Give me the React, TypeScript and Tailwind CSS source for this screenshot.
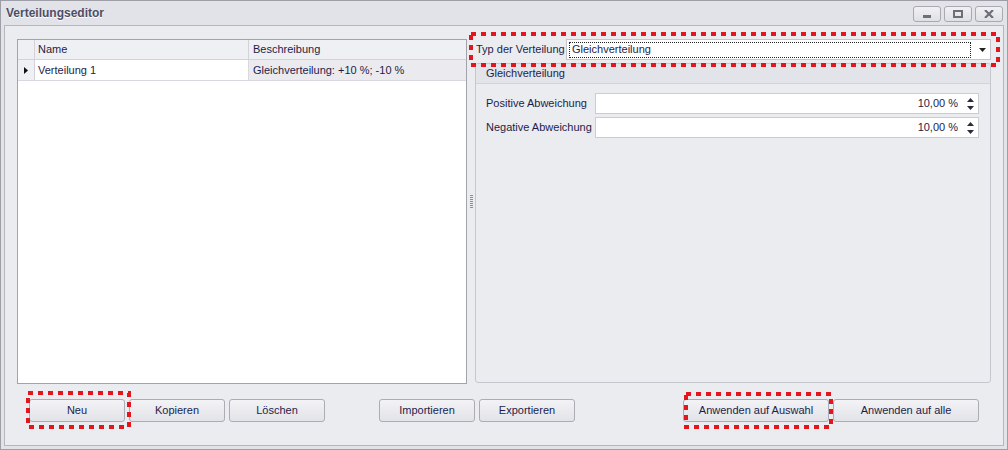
import React from "react";

const RED = "#e3161d";

function DotBox({ x, y, w, h }: { x: number; y: number; w: number; h: number }) {
  return (
    <svg
      className="absolute pointer-events-none"
      style={{ left: x, top: y }}
      width={w}
      height={h}
    >
      <rect
        x={2}
        y={2}
        width={w - 4}
        height={h - 4}
        fill="none"
        stroke={RED}
        strokeWidth={4}
        strokeDasharray="5 5"
      />
    </svg>
  );
}

function Btn({ label, w }: { label: string; w: string }) {
  return (
    <div
      className={`${w} h-[23px] flex items-center justify-center rounded-[3px] border border-[#acacb4] bg-gradient-to-b from-[#f3f3f6] to-[#e2e3e8] text-[#1d1d4a]`}
    >
      {label}
    </div>
  );
}

function WinBtn({ kind }: { kind: "min" | "max" | "close" }) {
  return (
    <div className="w-[28px] h-[16px] rounded-[3px] border border-[#a9a9b1] bg-gradient-to-b from-[#f1f1f4] to-[#dfe0e5] flex items-center justify-center">
      {kind === "min" && (
        <svg width="10" height="8">
          <rect x="1" y="5" width="8" height="3" fill="#6e6e78" />
        </svg>
      )}
      {kind === "max" && (
        <svg width="10" height="8">
          <rect x="1" y="1" width="8" height="6" fill="none" stroke="#6e6e78" strokeWidth="2" />
        </svg>
      )}
      {kind === "close" && (
        <svg width="10" height="8">
          <path d="M1 0 L9 8 M9 0 L1 8" stroke="#6e6e78" strokeWidth="2.2" />
        </svg>
      )}
    </div>
  );
}

function SpinInput() {
  return (
    <div className="flex-1 h-[21px] bg-white border border-[#cbcbd3] flex items-center justify-end pr-[4px]">
      <span className="mr-[9px]">10,00 %</span>
      <svg width="7" height="14">
        <path d="M3.5 1 L7 5 L0 5 Z" fill="#2a2a3a" />
        <path d="M0 9 L7 9 L3.5 13 Z" fill="#2a2a3a" />
      </svg>
    </div>
  );
}

export default function App() {
  return (
    <div className="relative w-[1008px] h-[450px] overflow-hidden bg-[#e2e3e8] border border-[#9e9ea6] flex flex-col font-['Liberation_Sans',Arial,sans-serif] text-[11px] text-[#1d1d4a]">
      {/* Title bar */}
      <div className="h-[24px] flex items-center justify-between pl-[5px] pr-[4px]">
        <span className="font-bold text-[12px] text-[#4d4d66] [text-shadow:0_1px_0_#ffffff]">
          Verteilungseditor
        </span>
        <div className="flex gap-[3px] pt-[1px]">
          <WinBtn kind="min" />
          <WinBtn kind="max" />
          <WinBtn kind="close" />
        </div>
      </div>

      {/* Content */}
      <div className="flex-1 mx-[3px] mb-[3px] border border-[#b6b6be] bg-[#ebecf0] flex flex-col pt-[13px] px-[12px]">
        <div className="flex h-[345px]">
          {/* Grid */}
          <div className="w-[450px] h-full border border-[#a3a3ab] bg-white flex flex-col">
            <div className="h-[20px] flex bg-[#eff0f3] border-b border-[#d2d2da]">
              <div className="w-[17px] border-r border-[#d2d2da]" />
              <div className="w-[214px] border-r border-[#d2d2da] flex items-center pl-[3px]">Name</div>
              <div className="flex-1 flex items-center pl-[4px]">Beschreibung</div>
            </div>
            <div className="h-[21px] flex border-b border-[#d8d8e0]">
              <div className="w-[17px] bg-[#eff0f3] border-r border-[#d2d2da] flex items-center justify-center">
                <svg width="4" height="7">
                  <path d="M0 0 L4 3.5 L0 7 Z" fill="#111" />
                </svg>
              </div>
              <div className="w-[214px] border-r border-[#d8d8e0] flex items-center pl-[3px] bg-white">Verteilung 1</div>
              <div className="flex-1 flex items-center pl-[4px] bg-[#ebebef]">Gleichverteilung: +10 %; -10 %</div>
            </div>
          </div>

          {/* Splitter */}
          <div className="w-[8px] flex items-center justify-center">
            <div className="flex flex-col gap-[1px] mt-[-20px]">
              {[0, 1, 2, 3, 4, 5, 6].map((i) => (
                <div key={i} className="w-[3px] h-[1px] bg-[#8a8aa0]" />
              ))}
            </div>
          </div>

          {/* Right panel */}
          <div className="w-[516px] flex flex-col">
            <div className="h-[21px] flex items-center">
              <span className="w-[91px] pl-[1px] whitespace-nowrap">Typ der Verteilung</span>
              <div className="flex-1 h-[21px] bg-white border border-[#c3c3cb] flex items-center pl-[2px] pr-[4px]">
                <div className="flex-1 h-[16px] border border-dotted border-[#222] flex items-center pl-[2px]">
                  Gleichverteilung
                </div>
                <svg width="7" height="4" className="ml-[8px]">
                  <path d="M0 0 L7 0 L3.5 4 Z" fill="#222" />
                </svg>
              </div>
            </div>
            <div className="mt-[3px] h-[320px] rounded-[3px] border border-[#c6c6ce] flex flex-col">
              <div className="h-[20px] bg-[#e3e4e9] border-b border-[#d2d2da] flex items-center pl-[10px] rounded-t-[3px]">
                Gleichverteilung
              </div>
              <div className="flex flex-col gap-[3px] pt-[9px] pl-[10px] pr-[11px]">
                <div className="flex items-center">
                  <span className="w-[109px]">Positive Abweichung</span>
                  <SpinInput />
                </div>
                <div className="flex items-center">
                  <span className="w-[109px]">Negative Abweichung</span>
                  <SpinInput />
                </div>
              </div>
            </div>
          </div>
        </div>

        {/* Buttons */}
        <div className="flex mt-[15px] pl-[12px]">
          <div className="flex gap-[4px]">
            <Btn label="Neu" w="w-[96px]" />
            <Btn label="Kopieren" w="w-[96px]" />
            <Btn label="Löschen" w="w-[96px]" />
          </div>
          <div className="flex gap-[4px] ml-[54px]">
            <Btn label="Importieren" w="w-[96px]" />
            <Btn label="Exportieren" w="w-[96px]" />
          </div>
          <div className="flex gap-[4px] ml-[108px]">
            <Btn label="Anwenden auf Auswahl" w="w-[146px]" />
            <Btn label="Anwenden auf alle" w="w-[146px]" />
          </div>
        </div>
      </div>

      {/* Annotation overlays */}
      <DotBox x={468} y={31} w={531} h={35} />
      <DotBox x={25} y={390} w={105} h={38} />
      <DotBox x={683} y={391} w={149} h={37} />
    </div>
  );
}
